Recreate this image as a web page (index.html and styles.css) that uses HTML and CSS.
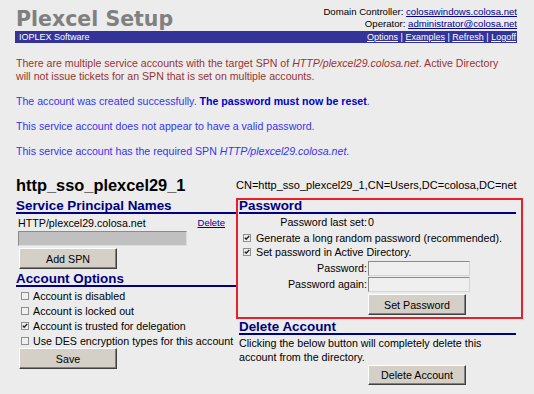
FILE: index.html
```html
<!DOCTYPE html>
<html>
<head>
<meta charset="utf-8">
<title>Plexcel Setup</title>
<link rel="stylesheet" href="styles.css">
</head>
<body>
<div class="page">
  <header class="top">
    <h1 class="title">Plexcel Setup</h1>
    <div class="who">
      <div>Domain Controller: <a href="#">colosawindows.colosa.net</a></div>
      <div>Operator: <a href="#">administrator@colosa.net</a></div>
    </div>
  </header>
  <nav class="bar">
    <span>IOPLEX Software</span>
    <span class="links"><a href="#">Options</a> | <a href="#">Examples</a> | <a href="#">Refresh</a> | <a href="#">Logoff</a></span>
  </nav>

  <p class="msg err">There are multiple service accounts with the target SPN of <i>HTTP/plexcel29.colosa.net</i>. Active Directory will not issue tickets for an SPN that is set on multiple accounts.</p>
  <p class="msg info">The account was created successfully. <b>The password must now be reset</b>.</p>
  <p class="msg info">This service account does not appear to have a valid password.</p>
  <p class="msg info">This service account has the required SPN <i>HTTP/plexcel29.colosa.net</i>.</p>

  <div class="grid">
    <div class="acct-name">http_sso_plexcel29_1</div>
    <div class="acct-dn">CN=http_sso_plexcel29_1,CN=Users,DC=colosa,DC=net</div>

    <div class="left">
      <h2 class="sec">Service Principal Names</h2>
      <div class="spn-row"><span>HTTP/plexcel29.colosa.net</span><a href="#" class="del">Delete</a></div>
      <div class="spn-input"></div>
      <button class="btn btn-left btn-spn">Add SPN</button>

      <h2 class="sec sec-opts">Account Options</h2>
      <div class="opts">
        <div class="cbrow"><svg class="cb" width="8" height="8" viewBox="0 0 8 8"><rect x=".5" y=".5" width="7" height="7" fill="#f0f0f0" stroke="#8e8e8e"/></svg><span>Account is disabled</span></div>
        <div class="cbrow"><svg class="cb" width="8" height="8" viewBox="0 0 8 8"><rect x=".5" y=".5" width="7" height="7" fill="#f0f0f0" stroke="#8e8e8e"/></svg><span>Account is locked out</span></div>
        <div class="cbrow"><svg class="cb" width="8" height="8" viewBox="0 0 8 8"><rect x=".5" y=".5" width="7" height="7" fill="#f0f0f0" stroke="#8e8e8e"/><path d="M1.8 3.6 L3.2 5.2 L6.2 2.1" fill="none" stroke="#1e1e1e" stroke-width="1.4"/></svg><span>Account is trusted for delegation</span></div>
        <div class="cbrow"><svg class="cb" width="8" height="8" viewBox="0 0 8 8"><rect x=".5" y=".5" width="7" height="7" fill="#f0f0f0" stroke="#8e8e8e"/></svg><span>Use DES encryption types for this account</span></div>
      </div>
      <button class="btn btn-left">Save</button>
    </div>

    <div class="right">
      <div class="pw-box">
        <h2 class="sec sec-pw">Password</h2>
        <div class="pw-grid">
          <div class="lbl row-last">Password last set:</div><div class="val row-last">0</div>
          <div class="cbrow cbrow-r span2"><svg class="cb" width="8" height="8" viewBox="0 0 8 8"><rect x=".5" y=".5" width="7" height="7" fill="#f0f0f0" stroke="#8e8e8e"/><path d="M1.8 3.6 L3.2 5.2 L6.2 2.1" fill="none" stroke="#1e1e1e" stroke-width="1.4"/></svg><span>Generate a long random password (recommended).</span></div>
          <div class="cbrow cbrow-r span2"><svg class="cb" width="8" height="8" viewBox="0 0 8 8"><rect x=".5" y=".5" width="7" height="7" fill="#f0f0f0" stroke="#8e8e8e"/><path d="M1.8 3.6 L3.2 5.2 L6.2 2.1" fill="none" stroke="#1e1e1e" stroke-width="1.4"/></svg><span>Set password in Active Directory.</span></div>
          <div class="lbl row-in1">Password:</div><div class="row-in1"><div class="pw-input"></div></div>
          <div class="lbl row-in2">Password again:</div><div class="row-in2"><div class="pw-input"></div></div>
          <div></div><div><button class="btn btn-pw">Set Password</button></div>
        </div>
      </div>
      <div class="del-sec">
        <h2 class="sec">Delete Account</h2>
        <p class="del-text">Clicking the below button will completely delete this account from the directory.</p>
        <button class="btn btn-del">Delete Account</button>
      </div>
    </div>
  </div>
</div>
</body>
</html>
```

FILE: styles.css
```css
body {
  margin: 0;
  background: #ececec;
  font-family: "Liberation Sans", Arial, sans-serif;
  font-size: 10.7px;
  color: #000;
}

.page {
  width: 502px;
  padding-left: 15px;
}

.top {
  display: flex;
  justify-content: space-between;
  align-items: flex-start;
  height: 31px;
}

.title {
  margin: 0;
  padding: 8px 0 0 1px;
  font-family: "DejaVu Sans", Verdana, sans-serif;
  font-weight: bold;
  font-size: 20.5px;
  line-height: 23px;
  color: #808080;
}

.who {
  padding-top: 6px;
  font-size: 9.6px;
  line-height: 12px;
  text-align: right;
}

.who a {
  color: #000099;
}

.bar {
  display: flex;
  justify-content: space-between;
  height: 12px;
  padding: 0 1px 0 4px;
  background: #333399;
  color: #fff;
  font-size: 9px;
  line-height: 12px;
}

.bar a {
  color: #fff;
}

.msg {
  margin: 0 0 12px;
  padding-left: 1px;
  font-size: 10.6px;
  line-height: 13px;
}

.err {
  max-width: 494px;
  margin-top: 14px;
  color: #993333;
}

.info {
  color: #3535f0;
}

.info b {
  color: #0000cc;
}

.grid {
  display: grid;
  grid-template-columns: 220px 287px;
  row-gap: 3px;
  margin-left: 1px;
  margin-top: 17px;
}

.acct-name {
  font-weight: bold;
  font-size: 16.4px;
  line-height: 20px;
}

.acct-dn {
  font-size: 11px;
  line-height: 20px;
}

.left {
  padding-top: 1px;
}

.sec {
  margin: 0;
  font-size: 13.4px;
  font-weight: bold;
  line-height: 13px;
  color: #000080;
  border-bottom: 2px solid #000080;
}

.spn-row {
  display: flex;
  justify-content: space-between;
  align-items: center;
  height: 14px;
  margin-top: 2px;
  padding: 0 11px 0 2px;
  line-height: 14px;
}

.del {
  font-size: 9.5px;
  color: #000099;
}

.spn-input {
  box-sizing: border-box;
  width: 169px;
  height: 15px;
  margin: 1px 0 0 2px;
  background: #c0c0c0;
  border: 1px solid;
  border-color: #8a8a8a #dcdcdc #dcdcdc #8a8a8a;
}

.btn {
  display: block;
  box-sizing: border-box;
  width: 98px;
  height: 21px;
  padding: 0;
  background: #d4d0c8;
  border: 1px solid;
  border-color: #ffffff #404040 #404040 #ffffff;
  box-shadow: inset -1px -1px 0 #808080;
  font-family: "Liberation Sans", Arial, sans-serif;
  font-size: 10.7px;
  color: #000;
}

.btn-left {
  margin-left: 3px;
}

.btn-spn {
  margin-top: 2px;
}

.sec-opts {
  margin-top: 3px;
}

.opts {
  margin-top: 1px;
}

.cbrow {
  display: flex;
  align-items: center;
  gap: 4px;
  height: 15px;
  padding-left: 5px;
  white-space: nowrap;
}

.cb {
  flex: none;
  display: block;
}

.pw-box {
  border: 2px solid #e8202a;
  padding: 0 5px 2px 1px;
}

.sec-pw {
  line-height: 12px;
}

.pw-grid {
  display: grid;
  grid-template-columns: 128px 1fr;
  column-gap: 1px;
}

.span2 {
  grid-column: 1 / 3;
}

.lbl {
  text-align: right;
}

.row-last {
  height: 17px;
  line-height: 17px;
}

.cbrow-r {
  height: 14px;
  padding-left: 4px;
  gap: 5px;
}

.row-in1 {
  padding-top: 2px;
  line-height: 15px;
}

.row-in2 {
  padding-top: 1px;
  line-height: 15px;
}

.pw-input {
  box-sizing: border-box;
  width: 102px;
  height: 15px;
  background: #efefef;
  border: 1px solid;
  border-color: #8a8a8a #d4d4d4 #d4d4d4 #8a8a8a;
}

.btn-pw {
  margin-top: 2px;
}

.del-sec {
  width: 277px;
  padding-left: 3px;
  margin-top: 1px;
}

.del-text {
  margin: 2px 0 0;
  line-height: 13.5px;
}

.btn-del {
  margin: 1px 0 0 129px;
  height: 20px;
}
```
